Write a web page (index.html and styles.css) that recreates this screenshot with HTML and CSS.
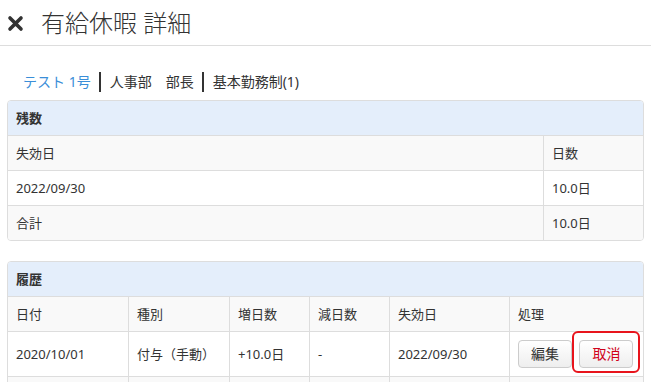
FILE: index.html
```html
<!DOCTYPE html>
<html lang="ja">
<head>
    <meta charset="UTF-8">
    <title>有給休暇 詳細</title>
    <link rel="stylesheet" href="styles.css">
</head>
<body>
    <div class="header">
        <svg class="close" width="17" height="17" viewBox="0 0 17 17">
            <path d="M3 3 L14 14 M14 3 L3 14" stroke="#333" stroke-width="3.6" stroke-linecap="round"/>
        </svg>
        <h1 class="title">有給休暇 詳細</h1>
    </div>

    <div class="content">
        <div class="crumbs">
            <span class="crumb name">テスト 1号</span>
            <span class="crumb">人事部　部長</span>
            <span class="crumb">基本勤務制(1)</span>
        </div>

        <div class="panel">
            <div class="panel_head">残数</div>
            <table class="grid">
                <tr class="th_row">
                    <td>失効日</td>
                    <td class="days">日数</td>
                </tr>
                <tr>
                    <td>2022/09/30</td>
                    <td>10.0日</td>
                </tr>
                <tr class="th_row">
                    <td>合計</td>
                    <td>10.0日</td>
                </tr>
            </table>
        </div>

        <div class="panel">
            <div class="panel_head">履歴</div>
            <table class="grid history">
                <tr class="th_row">
                    <td class="c1">日付</td>
                    <td class="c2">種別</td>
                    <td class="c3">増日数</td>
                    <td class="c4">減日数</td>
                    <td class="c5">失効日</td>
                    <td>処理</td>
                </tr>
                <tr>
                    <td>2020/10/01</td>
                    <td>付与（手動）</td>
                    <td>+10.0日</td>
                    <td>-</td>
                    <td>2022/09/30</td>
                    <td class="actions">
                        <button class="btn">編集</button>
                        <span class="mark"><button class="btn cancel">取消</button></span>
                    </td>
                </tr>
                <tr class="th_row">
                    <td>&nbsp;</td>
                    <td></td>
                    <td></td>
                    <td></td>
                    <td></td>
                    <td></td>
                </tr>
            </table>
        </div>
    </div>
</body>
</html>
```

FILE: styles.css
```css
body {
    font-family: "Noto Sans", "Noto Sans CJK JP", sans-serif;
    margin: 0;
    padding: 0;
    background-color: #fff;
    color: #333;
}
.header {
    display: flex;
    align-items: center;
    height: 45px;
    padding-left: 7px;
    border-bottom: 1px solid #ddd;
}
.close {
    margin-top: 2px;
}
.title {
    margin: 0 0 0 17px;
    font-size: 24px;
    font-weight: 300;
    line-height: 30px;
}
.content {
    padding: 0 7px;
}
.crumbs {
    display: flex;
    align-items: center;
    margin: 26px 0 8px;
    padding-left: 16px;
    font-size: 14px;
}
.crumb {
    line-height: 20px;
}
.crumb + .crumb {
    border-left: 2px solid #333;
    margin-left: 8px;
    padding-left: 9px;
}
.name {
    color: #3a8ed8;
}
.panel {
    border: 1px solid #ddd;
    border-radius: 4px;
    overflow: hidden;
    margin-bottom: 20px;
}
.panel_head {
    background-color: #e4eefb;
    padding: 8px;
    font-size: 13px;
    font-weight: bold;
    line-height: 18px;
}
.grid {
    width: 100%;
    border-collapse: collapse;
    font-size: 13px;
}
.grid td {
    padding: 8px;
    line-height: 18px;
    border-top: 1px solid #ddd;
    vertical-align: middle;
}
.grid td + td {
    border-left: 1px solid #ddd;
}
.th_row {
    background-color: #f9f9f9;
}
.days {
    width: 83px;
}
.history {
    table-layout: fixed;
}
.c1 { width: 104px; }
.c2 { width: 84px; }
.c3 { width: 63px; }
.c4 { width: 63px; }
.c5 { width: 103px; }
.actions {
    white-space: nowrap;
}
.btn {
    font-family: inherit;
    font-size: 14px;
    line-height: 18px;
    padding: 4px 12px;
    border: 1px solid #ccc;
    border-radius: 4px;
    background: linear-gradient(#fff, #eee);
    color: #333;
    vertical-align: middle;
}
.mark {
    position: relative;
    display: inline-block;
    margin-left: 4px;
}
.mark::after {
    content: "";
    position: absolute;
    top: -9px;
    left: -7px;
    right: -7px;
    bottom: -5px;
    border: 2px solid #e8141c;
    border-radius: 6px;
}
.cancel {
    color: #d0021b;
}
```
